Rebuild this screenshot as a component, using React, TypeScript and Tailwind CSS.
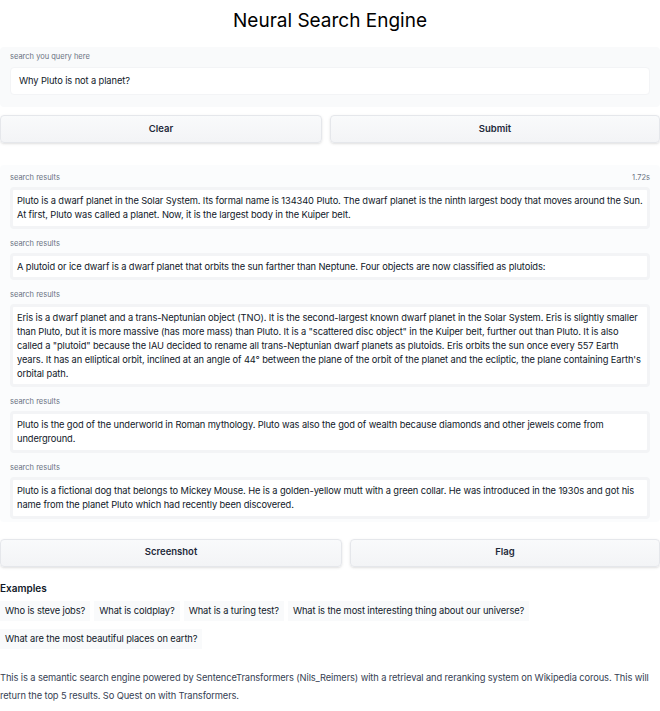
import React from "react";

const results = [
  "Pluto is a dwarf planet in the Solar System. Its formal name is 134340 Pluto. The dwarf planet is the ninth largest body that moves around the Sun. At first, Pluto was called a planet. Now, it is the largest body in the Kuiper belt.",
  "A plutoid or ice dwarf is a dwarf planet that orbits the sun farther than Neptune. Four objects are now classified as plutoids:",
  "Eris is a dwarf planet and a trans-Neptunian object (TNO). It is the second-largest known dwarf planet in the Solar System. Eris is slightly smaller than Pluto, but it is more massive (has more mass) than Pluto. It is a \"scattered disc object\" in the Kuiper belt, further out than Pluto. It is also called a \"plutoid\" because the IAU decided to rename all trans-Neptunian dwarf planets as plutoids. Eris orbits the sun once every 557 Earth years. It has an elliptical orbit, inclined at an angle of 44° between the plane of the orbit of the planet and the ecliptic, the plane containing Earth's orbital path.",
  "Pluto is the god of the underworld in Roman mythology. Pluto was also the god of wealth because diamonds and other jewels come from underground.",
  "Pluto is a fictional dog that belongs to Mickey Mouse. He is a golden-yellow mutt with a green collar. He was introduced in the 1930s and got his name from the planet Pluto which had recently been discovered.",
];

const examples = [
  "Who is steve jobs?",
  "What is coldplay?",
  "What is a turing test?",
  "What is the most interesting thing about our universe?",
  "What are the most beautiful places on earth?",
];

function Btn({ label, className = "flex-1" }: { label: string; className?: string }) {
  return (
    <button
      className={`${className} h-[28px] rounded-[4px] border border-gray-200 bg-gradient-to-b from-gray-50 to-gray-100 text-[9.5px] font-semibold text-gray-800 shadow-sm`}
    >
      {label}
    </button>
  );
}

export default function App() {
  return (
    <div
      className="w-[660px] bg-white text-gray-800"
      style={{ fontFamily: "Inter, 'Liberation Sans', sans-serif" }}
    >
      <h1 className="pt-[8px] text-center text-[19px] leading-[26px] text-black">
        Neural Search Engine
      </h1>

      <div className="mt-[13px] rounded-[4px] bg-gray-50 px-[10px] pt-[4px] pb-[12px]">
        <div className="text-[7.5px] leading-[11px] text-gray-500">search you query here</div>
        <div className="mt-[5px] flex h-[28px] items-center rounded-[4px] border border-gray-100 bg-white px-[8px] text-[9.3px] tracking-[-0.1px] text-gray-900">
          Why Pluto is not a planet?
        </div>
      </div>

      <div className="mt-[8px] flex gap-[8px]">
        <Btn label="Clear" className="w-[322px]" />
        <Btn label="Submit" />
      </div>

      <div className="mt-[22px] flex flex-col gap-[9px] rounded-[4px] bg-gray-50/60 px-[10px] pt-[7px] pb-[3px]">
        {results.map((r, i) => (
          <div key={i}>
            <div className="flex justify-between text-[7.5px] leading-[11px] text-gray-500">
              <span>search results</span>
              {i === 0 && <span>1.72s</span>}
            </div>
            <div className="mt-[4px] rounded-[4px] border-[3px] border-gray-100 bg-white px-[4px] py-[4px] text-[9.3px] leading-[13.8px] tracking-[-0.1px] text-gray-900">
              {r}
            </div>
          </div>
        ))}
      </div>

      <div className="mt-[17px] flex gap-[8px]">
        <Btn label="Screenshot" className="w-[342px]" />
        <Btn label="Flag" />
      </div>

      <div className="mt-[14px] text-[10px] font-semibold text-gray-900">Examples</div>
      <div className="mt-[5px] flex flex-wrap gap-x-[4px] gap-y-[8px]">
        {examples.map((e) => (
          <div key={e} className="bg-gray-50 px-[5px] py-[4px] text-[9.3px] leading-[12px] tracking-[-0.1px] text-gray-900">
            {e}
          </div>
        ))}
      </div>

      <p className="mt-[20px] text-[9.3px] leading-[18px] tracking-[-0.1px] text-gray-700">
        This is a semantic search engine powered by SentenceTransformers (Nils_Reimers) with a retrieval and reranking system on Wikipedia corous. This will return the top 5 results. So Quest on with Transformers.
      </p>
    </div>
  );
}
